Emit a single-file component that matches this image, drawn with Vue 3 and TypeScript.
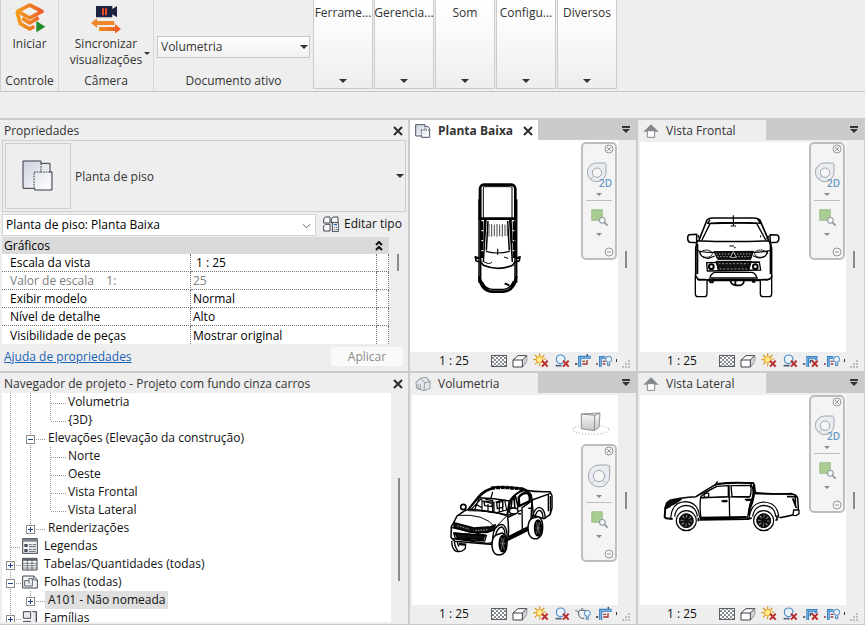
<script setup lang="ts">
import { ref } from 'vue'

type Guide = 'line' | 'tee' | 'corner' | 'plus' | 'minus' | 'plus-last'

interface TreeRow {
  label: string
  guides: Guide[]
  icon?: string
  selected?: boolean
}

interface Property {
  name: string
  value: string
  muted?: boolean
  indent?: boolean
}

interface ViewPane {
  id: string
  title: string
  icon: string
  active?: boolean
  is3d?: boolean
  tools: string[]
}

const documents = ['Volumetria', 'Planta Baixa', 'Vista Frontal', 'Vista Lateral']
const activeDocument = ref('Volumetria')
const viewType = ref('Planta de piso: Planta Baixa')
const menus = ['Ferrame...', 'Gerencia...', 'Som', 'Configu...', 'Diversos']

const properties: Property[] = [
  { name: 'Escala da vista', value: '1 : 25', indent: true },
  { name: 'Valor de escala    1:', value: '25', muted: true },
  { name: 'Exibir modelo', value: 'Normal' },
  { name: 'Nível de detalhe', value: 'Alto' },
  { name: 'Visibilidade de peças', value: 'Mostrar original' },
]

const tree: TreeRow[] = [
  { label: 'Volumetria', guides: ['line', 'line', 'tee'] },
  { label: '{3D}', guides: ['line', 'line', 'corner'] },
  { label: 'Elevações (Elevação da construção)', guides: ['line', 'minus'] },
  { label: 'Norte', guides: ['line', 'line', 'tee'] },
  { label: 'Oeste', guides: ['line', 'line', 'tee'] },
  { label: 'Vista Frontal', guides: ['line', 'line', 'tee'] },
  { label: 'Vista Lateral', guides: ['line', 'line', 'corner'] },
  { label: 'Renderizações', guides: ['line', 'plus-last'] },
  { label: 'Legendas', guides: ['tee'], icon: 'legend' },
  { label: 'Tabelas/Quantidades (todas)', guides: ['plus'], icon: 'table' },
  { label: 'Folhas (todas)', guides: ['minus'], icon: 'sheet' },
  { label: 'A101 - Não nomeada', guides: ['line', 'plus-last'], selected: true },
  { label: 'Famílias', guides: ['plus'], icon: 'family' },
]

const panes: ViewPane[] = [
  { id: 'top', title: 'Planta Baixa', icon: 'plan', active: true, tools: ['checker', 'box', 'sun', 'shadow', 'crop', 'cropbulb'] },
  { id: 'front', title: 'Vista Frontal', icon: 'elevation', tools: ['checker', 'box', 'sun', 'shadow', 'cropx', 'cropbulb'] },
  { id: 'iso', title: 'Volumetria', icon: 'house', is3d: true, tools: ['checker', 'box', 'sun', 'shadow', 'teapot', 'crop'] },
  { id: 'side', title: 'Vista Lateral', icon: 'elevation', tools: ['checker', 'box', 'sun', 'shadow', 'cropx', 'cropbulb'] },
]

const toolNames: Record<string, string> = {
  checker: 'Nível de detalhe',
  box: 'Estilo visual',
  sun: 'Caminho do sol',
  shadow: 'Sombras',
  crop: 'Região de recorte',
  cropx: 'Região de recorte',
  cropbulb: 'Exibir recorte',
  teapot: 'Renderização',
}
</script>

<template>
  <div class="app">
    <svg class="defs" aria-hidden="true">
      <defs>
        <linearGradient id="gLogo" gradientUnits="userSpaceOnUse" x1="0" y1="0" x2="96" y2="0"><stop offset="0" stop-color="#f2a51c" /><stop offset="1" stop-color="#ec5528" /></linearGradient>
        <linearGradient id="gPaper" x1="0" y1="0" x2="1" y2="1"><stop offset="0" stop-color="#ccd1de" /><stop offset="1" stop-color="#ffffff" /></linearGradient>
        <linearGradient id="gCube" x1="0" y1="0" x2="0" y2="1"><stop offset="0" stop-color="#fafafa" /><stop offset="1" stop-color="#c4c4c4" /></linearGradient>
        <pattern id="pCheck" x="3" width="12" height="12" patternUnits="userSpaceOnUse"><rect width="12" height="12" fill="#fff" /><path d="M0 0h6v6H0zM6 6h6v6H6z" fill="#878b92" /></pattern>
      </defs>

      <symbol id="plan" viewBox="0 0 48 42">
        <path d="M2 2h28v5h14v33H20v-4H2z" fill="url(#gPaper)" />
        <path d="M18 36H2V2h28v5h8l6 7v26H20v-4" fill="none" stroke="#4b5568" stroke-width="3" />
        <path d="M30 6v12M18 18h26M19 18v18" fill="none" stroke="#4b5568" stroke-width="3" stroke-dasharray="4 3" />
      </symbol>
      <symbol id="elevation" viewBox="0 0 48 42">
        <path d="M24 1 47 23H1z" fill="#85898e" />
        <path d="M13 20h22v20H13z" fill="#fff" stroke="#85898e" stroke-width="3" />
        <path d="m24 5 15 15H9z" fill="#85898e" />
      </symbol>
      <symbol id="house" viewBox="0 0 48 42">
        <path d="M3 17 17 3l16-2 12 13v20L27 41 5 34z" fill="#e3e6ec" stroke="#8c9198" stroke-width="2.5" />
        <path d="m3 17 14-14 12 14-2 24M29 17l16-3M33 1l14 15M9 21v14l7 2V22" fill="none" stroke="#8c9198" stroke-width="2.5" />
      </symbol>

      <symbol id="checker" viewBox="0 0 48 48"><rect x="1.500" y="7.500" width="45" height="33" fill="url(#pCheck)" stroke="#5a5f66" stroke-width="3" /></symbol>
      <symbol id="box" viewBox="0 0 48 48">
        <path d="M3 21 18 8h26v17L31 42H3z" fill="#fff" stroke="#3e4349" stroke-width="3" stroke-linejoin="round" />
        <path d="M31 21 44 8v17L31 42z" fill="#d2d4d8" /><path d="M3 21h28v21M31 21 44 8" fill="none" stroke="#3e4349" stroke-width="3" />
      </symbol>
      <symbol id="redx" viewBox="0 0 48 48"><path d="m27 23 17 18M44 23 27 41" stroke="#b92b28" stroke-width="6" /></symbol>
      <symbol id="sun" viewBox="0 0 48 48">
        <path d="M20 1v8M1 20h8M6 6l6 6M34 6l-6 6M6 34l6-6M20 32v8M32 18h8" stroke="#d99a18" stroke-width="3.5" />
        <circle cx="20" cy="20" r="10" fill="#ffe98a" stroke="#e5a322" stroke-width="3" /><use href="#redx" />
      </symbol>
      <symbol id="shadow" viewBox="0 0 48 48">
        <circle cx="20" cy="19" r="13" fill="#eaf3fb" stroke="#4a8cc8" stroke-width="3.5" /><path d="M5 38h18" stroke="#4f5f78" stroke-width="5" /><use href="#redx" />
      </symbol>
      <symbol id="crop" viewBox="0 0 48 48">
        <path d="M14 42V13h33" fill="none" stroke="#2b78bf" stroke-width="9" /><path d="M14 42V13h33" fill="none" stroke="#8fc3ee" stroke-width="3" />
        <path d="M22 33h14V21M22 25h8" fill="none" stroke="#a6332f" stroke-width="4" /><path d="M0 33h7M37 8V3" stroke="#333" stroke-width="4" />
      </symbol>
      <symbol id="cropx" viewBox="0 0 48 48">
        <path d="M14 42V13h25v9" fill="none" stroke="#2b78bf" stroke-width="8" /><path d="M14 42V13h25v9" fill="none" stroke="#8fc3ee" stroke-width="2.500" /><path d="M0 33h7M22 31v-9h8" fill="none" stroke="#34506f" stroke-width="4" /><use href="#redx" />
      </symbol>
      <symbol id="cropbulb" viewBox="0 0 48 48">
        <path d="M13 42V13h15" fill="none" stroke="#2b78bf" stroke-width="8" /><path d="M13 42V13h15" fill="none" stroke="#8fc3ee" stroke-width="2.500" /><path d="M0 33h6M20 25h8M20 33h8" fill="none" stroke="#8a3b48" stroke-width="4" />
        <circle cx="38" cy="19" r="9" fill="#e9f4fd" stroke="#4381b4" stroke-width="3" /><path d="M35 29v9h6v-9" fill="#cfe3f5" stroke="#4381b4" stroke-width="3" />
      </symbol>
      <symbol id="teapot" viewBox="0 0 48 48">
        <path d="M12 15h20l-5 20h-8c-7-5-7-12-7-20z" fill="#eef0f3" /><path d="M1 14c7 0 9 4 11 8M12 13h20M18 9h7M11 15c-2 13 2 20 10 22h7" fill="none" stroke="#5d6670" stroke-width="3" />
        <circle cx="37" cy="22" r="9" fill="#e9f4fd" stroke="#4381b4" stroke-width="3" /><path d="M34 31v9h6v-9" fill="#cfe3f5" stroke="#4381b4" stroke-width="3" />
      </symbol>

      <symbol id="legend" viewBox="0 0 48 48">
        <rect x="2" y="2" width="44" height="44" fill="#f3f4f6" stroke="#41464d" stroke-width="3" /><path d="M2 7h44" stroke="#7b828c" stroke-width="8" />
        <path d="M7 18h10v9H7zM7 33h10v9H7z" fill="#4a505a" /><path d="M21 20h8M32 20h10M21 26h20M21 34h8M32 34h10M21 40h20" stroke="#5e6570" stroke-width="3" />
      </symbol>
      <symbol id="table" viewBox="0 0 48 48">
        <path d="M2 7h43v35H2z" fill="#fff" stroke="#41464d" stroke-width="3" /><path d="M2 11h43" stroke="#5c636d" stroke-width="7" />
        <path d="M2 22h43M2 29h43M2 36h43M16 12v30M30 12v30" stroke="#5c636d" stroke-width="2.5" />
      </symbol>
      <symbol id="sheet" viewBox="0 0 48 48">
        <path d="M2 6h33l11 11v25H2z" fill="#f1f3f7" stroke="#41464d" stroke-width="3" /><path d="M35 6v12h11M8 36V20h13v-6h10v22zM21 20v9" fill="none" stroke="#5c6470" stroke-width="3" />
      </symbol>
      <symbol id="family" viewBox="0 0 48 48">
        <path d="M4 5h22v20H4zM31 5h12v37H31M4 34h22v12M4 34v12M43 5v37" fill="#e8eaef" stroke="#41464d" stroke-width="3" />
      </symbol>

      <symbol id="zoomregion" viewBox="0 0 48 48">
        <path d="M2 2h30v30H2z" fill="#a9cd93" stroke="#8fb27d" stroke-width="2" /><circle cx="32" cy="32" r="8" fill="#f5f7f9" stroke="#90989f" stroke-width="3" /><path d="m38 38 9 9" stroke="#90989f" stroke-width="5" />
      </symbol>
      <symbol id="wheel" viewBox="0 0 72 72">
        <path d="M36 3h26q6 0 6 6v27a32 33 0 1 1-32-33z" fill="#e9ecf1" stroke="#a2a7af" stroke-width="3" /><circle cx="36" cy="36" r="17" fill="#f6f6f7" stroke="#a2a7af" stroke-width="3" /><path d="m24 48-9 10M48 48l9 10" stroke="#a2a7af" stroke-width="2" />
      </symbol>
      <symbol id="wheel2d" viewBox="0 0 72 72">
        <path d="M28 3h24q5 0 5 5v22a28 28 0 1 1-29-27z" fill="#e9ecf1" stroke="#a2a7af" stroke-width="3" /><circle cx="30" cy="32" r="14" fill="#f6f6f7" stroke="#a2a7af" stroke-width="3" /><path d="m20 42-8 9" stroke="#a2a7af" stroke-width="2" />
      </symbol>
    </svg>

    <header class="ribbon">
      <section class="group control">
        <button class="tool" type="button">
          <svg class="tool-icon" viewBox="0 0 96 96">
            <g fill="none" stroke="url(#gLogo)" stroke-width="11" stroke-linejoin="round">
              <path d="M47 12 84 31 47 51 11 31z" /><path d="m9 33 10 35 28 16 14-8" /><path d="m25 52 22 14 27-16" />
            </g>
            <path d="M67 60v34l27-17z" fill="#228a27" />
          </svg>
          <span>Iniciar</span>
        </button>
        <span class="group-name">Controle</span>
      </section>
      <section class="group camera">
        <button class="tool" type="button">
          <svg class="tool-icon" viewBox="0 0 96 96">
            <path d="M18 15h49v9l14-9v34l-14-9v9H18z" fill="#1d2440" /><path d="M36 22h6v21h-6zM45 22h6v21h-6z" fill="#ec4a28" />
            <path d="m3 66 18-14v8h52v12H21v8z" fill="#f0862a" /><path d="m93 84-18-15v9H27v12h48v8z" fill="url(#gLogo)" />
          </svg>
          <span>Sincronizar<br>visualizações</span>
          <i class="caret small split"></i>
        </button>
        <span class="group-name">Câmera</span>
      </section>
      <section class="group document">
        <div class="combo">
          <select v-model="activeDocument" aria-label="Documento ativo">
            <option v-for="d in documents" :key="d">{{ d }}</option>
          </select>
          <i class="caret"></i>
        </div>
        <span class="group-name">Documento ativo</span>
      </section>
      <nav class="menus">
        <button v-for="m in menus" :key="m" class="menu" type="button">
          <span>{{ m }}</span><i class="caret"></i>
        </button>
      </nav>
    </header>

    <main class="workspace">
      <aside class="side">
        <section class="panel">
          <div class="titlebar">
            <h2>Propriedades</h2>
            <button class="close" type="button" aria-label="Fechar"><svg viewBox="0 0 10 10"><path d="m1 1 8 8M9 1 1 9" /></svg></button>
          </div>
          <button class="type" type="button">
            <span class="thumb">
              <svg viewBox="0 0 96 96">
                <path d="M3 3h54v6h27v80H37v-6H3z" fill="url(#gPaper)" />
                <path d="M36 85H3V3h54v7h27v26h6v54H38v-7" fill="none" stroke="#333945" stroke-width="3" />
                <path d="M57 10v26H90M57 36H36v46" fill="none" stroke="#333945" stroke-width="3" stroke-dasharray="5 3" />
              </svg>
            </span>
            <span class="type-name">Planta de piso</span>
            <i class="caret"></i>
          </button>
          <div class="instance">
            <div class="select">
              <select v-model="viewType" aria-label="Tipo de vista">
                <option>Planta de piso: Planta Baixa</option>
                <option>Elevação: Vista Frontal</option>
              </select>
              <svg viewBox="0 0 10 6"><path d="m1 1 4 4 4-4" /></svg>
            </div>
            <button class="edit" type="button">
              <svg viewBox="0 0 48 48">
                <path d="m2 9 5-6h14v18H2zM25 9l5-6h15v15M25 21V9M2 30l5-5h14v20H2zM25 21h18" fill="#f7f8fa" stroke="#42474e" stroke-width="3" />
                <rect x="28" y="20" width="18" height="26" fill="#fff" stroke="#42474e" stroke-width="3" /><path d="M32 26h10" stroke="#2c6fb5" stroke-width="4" /><path d="M32 34h3M38 34h4M32 40h3M38 40h4" stroke="#42474e" stroke-width="3" />
              </svg>
              <span>Editar tipo</span>
            </button>
          </div>
          <div class="prop-area">
            <table class="props">
              <colgroup><col class="c-name"><col><col class="c-btn"></colgroup>
              <thead>
                <tr><th colspan="2">Gráficos</th><th><svg viewBox="0 0 8 10"><path d="m1 4 3-3 3 3M1 9l3-3 3 3" /></svg></th></tr>
              </thead>
              <tbody>
                <tr v-for="p in properties" :key="p.name" :class="{ muted: p.muted }">
                  <td>{{ p.name }}</td><td :class="{ indent: p.indent }">{{ p.value }}</td><td></td>
                </tr>
              </tbody>
            </table>
            <div class="scroll"><i class="bar"></i></div>
          </div>
          <div class="panel-foot">
            <a href="#ajuda">Ajuda de propriedades</a>
            <button type="button" class="apply" disabled>Aplicar</button>
          </div>
        </section>

        <section class="panel browser">
          <div class="titlebar">
            <h2>Navegador de projeto - Projeto com fundo cinza carros</h2>
            <button class="close" type="button" aria-label="Fechar"><svg viewBox="0 0 10 10"><path d="m1 1 8 8M9 1 1 9" /></svg></button>
          </div>
          <div class="tree-area">
            <ul class="tree">
              <li v-for="row in tree" :key="row.label">
                <svg v-for="(g, i) in row.guides" :key="i" class="guide" viewBox="0 0 20 18">
                  <path v-if="g === 'line' || g === 'tee' || g === 'plus' || g === 'minus'" class="dots" d="M8.5 0v18" />
                  <path v-else class="dots" d="M8.5 0v10" />
                  <path v-if="g === 'tee' || g === 'corner'" class="dots" :d="row.icon ? 'M9 10.5h10' : 'M9 10.5h15'" />
                  <template v-if="g.startsWith('plus') || g === 'minus'">
                    <path class="dots" :d="row.icon ? 'M14 10.5h5' : 'M14 10.5h10'" />
                    <rect class="node" x="4.5" y="6.5" width="8" height="8" />
                    <path class="sign" :d="g === 'minus' ? 'M6 10.5h5' : 'M6 10.5h5M8.5 8v5'" />
                  </template>
                </svg>
                <svg v-if="row.icon" class="node-icon"><use :href="'#' + row.icon" /></svg>
                <span class="node-label" :class="{ selected: row.selected }">{{ row.label }}</span>
              </li>
            </ul>
            <div class="scroll"><i class="bar long"></i></div>
          </div>
        </section>
      </aside>

      <section class="views">
        <article v-for="pane in panes" :key="pane.id" class="view" :class="{ active: pane.active }">
          <div class="tabs">
            <div class="tab">
              <svg class="tab-icon"><use :href="'#' + pane.icon" /></svg>
              <h3>{{ pane.title }}</h3>
              <button v-if="pane.active" class="close" type="button" aria-label="Fechar vista"><svg viewBox="0 0 10 10"><path d="m1 1 8 8M9 1 1 9" /></svg></button>
            </div>
            <button class="tablist" type="button" aria-label="Lista de vistas"><i class="caret"></i></button>
          </div>
          <div class="stage">
            <div class="canvas">
              <svg v-if="pane.id === 'top'" class="drawing" viewBox="12 72 618 630">
                <g transform="translate(180 174)">
                  <path d="M36 38q2-12 14-12h78q12 0 14 12v90H36z" stroke-width="8" />
                  <path d="M46 126V36q0-4 5-4h76q5 0 5 4v90" stroke-width="3" />
                  <path d="M33 70v250M146 70v250M38 40v280M141 40v280" stroke-width="4.500" />
                  <path d="M33 128h113M54 130l-8 128M125 130l8 128M50 132l-2 70M129 132l3 70M60 135l-5 88M119 135l5 88" stroke-width="4.500" />
                  <path d="M41 136v110M139 136v110" stroke-width="10" stroke-dasharray="26 4" />
                  <path d="M63 144v38M71 144v38M79 146v34M87 144v38M95 146v34M103 144v38M111 146v34M118 144v36" stroke="#444" stroke-width="3" />
                  <path d="M54 226q34 10 71 0M89 218v18" stroke-width="3.500" />
                  <path d="m34 247-12-5 2 12 10 4M145 247l11-5-2 12-9 4M37 256l9 12q43 18 88 0l8-12" stroke-width="5" />
                  <path d="M46 256q18 12 26 2M108 243l12 4" stroke-width="3" />
                  <path d="M34 300q3 44 38 47h34q36-4 39-47" stroke-width="8" /><path d="M43 318q8 20 30 22h33q22-2 30-24" stroke-width="4" />
                  <path d="m36 310 14 24M143 310l-15 24M110 322l14 6M44 330l18 12" stroke-width="6" />
                </g>
              </svg>

              <svg v-else-if="pane.id === 'front'" class="drawing" viewBox="12 72 618 630">
                <path d="m189 366 24-60q6-6 16-6h125q13 0 18 7l26 60" stroke-width="5" />
                <path d="m198 366 24-49q70-3 140-1l27 50M222 305l-7 12M364 302l10 16" stroke-width="4" />
                <path d="M213 316q78-6 165 0M292 292v30M284 324h16" stroke-width="3.500" />
                <path d="M184 368q108 5 215 0l8 22v88l-12 8q-106-3-207 0l-9-12v-84z" stroke-width="4.500" />
                <path d="m182 349-22 1q-5 1-5 10 0 11 6 13l21 1zM402 350l22 1q5 2 5 10t-6 12l-20 1zM186 352l6 10M398 354l-6 10" stroke-width="4.500" />
                <path d="M179 396q22 9 58 7M407 396q-22 7-56 7M190 399q4 22 28 22l18-7M396 399q-4 20-28 21l-17-7" stroke-width="3.500" />
                <path d="M184 378v90M404 378v90" stroke-width="6" />
                <ellipse cx="211" cy="407" rx="18" ry="11" stroke-width="2.500" /><ellipse cx="374" cy="407" rx="18" ry="11" stroke-width="2.500" />
                <path d="m234 401 118-1-8 24H245z" fill="#111" stroke-width="3" /><path d="M240 408h108M244 416h100" stroke="#fff" stroke-width="2" stroke-dasharray="4 5" /><path d="m292 401-9 17h18z" fill="#000" stroke="#fff" stroke-width="2" />
                <path d="m212 434 158-2 4 24-160 3z" stroke-width="4" /><path d="M240 430h106l-8 28h-91z" fill="#111" stroke-width="3" /><path d="M247 437h90M251 453h82" stroke="#ccc" stroke-width="2" stroke-dasharray="6 5" />
                <circle cx="226" cy="446" r="7" stroke-width="6" /><circle cx="358" cy="446" r="7" stroke-width="6" />
                <path d="M222 477q6-14 18-14h105q12 0 17 14M220 480h146" stroke-width="4" />
                <path d="M178 470v57q0 9 8 9h19q8 0 8-9v-44M407 470v57q0 9-8 9h-18q-8 0-8-9v-44M183 484h26M377 484h26" stroke-width="4" />
                <path d="M214 487h158M218 482l5 11h8v-11M350 482v10h8M282 484q2 16 17 18h15q11-4 10-17M300 487q-5 10 0 15" stroke-width="5" />
                <path d="m216 327 4-3M374 352v6M280 384h14M294 389h5" stroke-width="3" />
              </svg>

              <svg v-else-if="pane.id === 'iso'" class="drawing" viewBox="12 69 618 630">
                <path d="M352 355q38 6 74 4l6 12v38l-6 19-18 12-36-12z" fill="#fff" stroke-width="4.500" />
                <path d="m369 370 3 14 56-20M421 366v52M427 372v54M372 384l1 32" stroke-width="4" />
                <path d="m137 452 10-20 20-14 14-6 28-36q20-26 56-31l78 4q20 6 27 22l6 55-8 44-67 32-10 18-56-4-95-8-11-12 1-32z" fill="#fff" stroke-width="4.500" />
                <path d="M250 348q50-5 98 5" stroke-width="10" stroke-dasharray="12 2" /><path d="M212 376q22-24 48-27M306 386q18-25 42-31 18 4 22 24" stroke-width="6" />
                <path d="m182 412 30-35q46 1 92 10l-7 42q-60-14-115-17z" stroke-width="4.500" />
                <path d="m213 380-14 36M222 382v34l36 6v-31l-34-4M232 382l22 4v34M262 390l28-6 6 30-30 8M254 360l-5 18M188 414l32-34M274 384v34M284 383v34M203 396l20 12M240 396v22" stroke-width="3.500" />
                <path d="m228 388 24 6v10l-22-3zM266 392l18-4v18l-16 4z" stroke-width="4" />
                <path d="m298 430 8-42 16-16 8 30-5 22-25 12M312 380l-4 40M318 378l3 34M303 408h20" stroke-width="5" />
                <path d="M332 376q10-14 25-13 10 4 8 24l-31 15z" stroke-width="7" /><path d="m342 404 1 70M344 406l28-20M300 430l42-16" stroke-width="4" />
                <ellipse cx="317" cy="417" rx="13" ry="9" fill="#fff" stroke-width="4.500" /><ellipse cx="166" cy="405" rx="8" ry="8" fill="#fff" stroke-width="5" />
                <path d="M298 430q6 34 2 72M330 425h9M361 409h9M372 386l-3 58" stroke-width="4.500" />
                <path d="M300 503q44-20 66-34l8-16M302 495l63-31" stroke-width="7" />
                <path d="M148 430q84-6 113 36M180 416q78 0 116 16M168 418l-20 14M262 466l34-34" stroke-width="3" />
                <path d="m138 452 60 16 50-4 14-6-4 16-22 8-52-2-46-14z" fill="#111" stroke-width="4" /><path d="m148 461 34 10M202 476l40-3" stroke="#ddd" stroke-width="2.500" stroke-dasharray="4 4" />
                <path d="m129 466 108 25M137 483l98 8-5 16-88-8zM132 500l106 14 17-2" stroke-width="4" /><path d="m142 484 88 7-5 11-77-5z" fill="#111" stroke-width="5" />
                <path d="M254 498q3-38 27-41 18 4 16 46M262 494q5-28 19-29 11 4 10 28" stroke-width="4" /><path d="M372 448q4-40 22-42 17 4 18 34M379 440q6-25 16-25 10 4 10 24" stroke-width="4" />
                <path d="M264 489q-12 6-12 29t14 30h13q17-4 18-31t-14-34z" fill="#fff" stroke-width="4.500" /><ellipse cx="284" cy="515" rx="10" ry="24" fill="#111" stroke-width="5" /><path d="m279 497 10 36M289 497l-10 36M276 515h16" stroke="#aaa" stroke-width="1.500" />
                <path d="M374 438q-14 6-14 31t16 31h11q16-4 17-31t-13-35z" fill="#fff" stroke-width="4.500" /><ellipse cx="390" cy="468" rx="10" ry="24" fill="#111" stroke-width="5" /><path d="m385 450 10 36M395 450l-10 36M382 468h16" stroke="#aaa" stroke-width="1.500" />
                <path d="M131 506q0 26 14 32 18 3 27-9l1-15M139 508q2 19 11 28M148 510l4 14" stroke-width="4" /><path d="m153 516 18 2" stroke-width="7" />
                <g stroke-width="2"><ellipse cx="549" cy="173" rx="54" ry="14" stroke="#b5b5b5" stroke-width="4" stroke-dasharray="3 6" /><path d="m520 126 56-3-3 43-15 10-38-6z" fill="url(#gCube)" stroke="#8f8f8f" stroke-width="3" /><path d="m520 126 40 4 15-6M560 130l-1 46" stroke="#8f8f8f" stroke-width="3" /></g>
              </svg>

              <svg v-else class="drawing" viewBox="12 69 618 630">
                <path d="M88 410q1-20 14-25 33-9 78-11 30-20 58-36 43-8 115-4l6 31 106 1q15 0 20 12l2 30-4 17q-26 8-52 12" stroke-width="4.500" />
                <path d="M88 405l-2 30 4 4 20 2M192 437l140-2M190 443l145-2 12-3" stroke-width="6" />
                <path d="m236 341 9-13M244 335q45-7 110-2M194 374q25-21 49-31l34-2v33l-80 3z" stroke-width="4" />
                <path d="m285 341 58-1q5 15-1 34l-54-1zM279 338l2 101M194 376q-4 30 1 62M345 336q11 20 4 40-11 28-11 48l-5 16" stroke-width="4" />
                <path d="M354 337q2 32-6 55-9 20-10 38" stroke-width="7" /><path d="M205 376q-4-15 13-12v11z" fill="#fff" stroke-width="4" />
                <path d="M197 378q75-5 144-2M255 387h20M326 383h20M182 373l60-30" stroke-width="3" /><path d="M260 385h13v5h-13zM330 381h13v5h-13z" fill="#000" stroke-width="2" />
                <path d="m92 394 19-8 24-4-18 12-24 12zM88 410l16-8" fill="#111" stroke-width="5" />
                <path d="M104 438q3-48 45-49 39 2 42 48M116 434q3-31 34-34 31 2 34 34M339 438q6-46 43-48 44 1 47 48M350 434q4-31 33-34 34 2 36 34" stroke-width="3.500" />
                <circle cx="151" cy="446" r="30" fill="#fff" stroke-width="3.500" /><circle cx="151" cy="446" r="21" fill="#111" stroke-width="3" /><circle cx="151" cy="446" r="13" stroke="#bbb" stroke-width="9" stroke-dasharray="2 8" />
                <circle cx="383" cy="446" r="30" fill="#fff" stroke-width="3.500" /><circle cx="383" cy="446" r="21" fill="#111" stroke-width="3" /><circle cx="383" cy="446" r="13" stroke="#bbb" stroke-width="9" stroke-dasharray="2 8" />
                <path d="M453 374h24M470 379l11 29M478 372v30M423 430v14h-5M354 362q65 6 115 3M187 437v11" stroke-width="5" /><path d="M473 414h16v11q-9 9-18 4z" fill="#fff" stroke-width="4" />
              </svg>

              <div class="navbar" :class="{ low: pane.is3d }">
                <button type="button" class="dot" aria-label="Fechar barra de navegação"><svg viewBox="0 0 10 10"><circle cx="5" cy="5" r="4" /><path d="m3 3 4 4M7 3 3 7" /></svg></button>
                <button type="button" class="wheel" aria-label="Roda de navegação">
                  <svg><use :href="pane.is3d ? '#wheel' : '#wheel2d'" /></svg><b v-if="!pane.is3d">2D</b>
                </button>
                <i class="caret small"></i>
                <hr>
                <button type="button" class="region" aria-label="Zoom da região"><svg><use href="#zoomregion" /></svg></button>
                <i class="caret small"></i>
                <button type="button" class="dot end" aria-label="Opções"><svg viewBox="0 0 10 10"><circle cx="5" cy="5" r="4" /><path d="M3 5h4" /></svg></button>
              </div>
            </div>
            <div class="scroll narrow"><i class="bar mid"></i></div>
          </div>
          <footer class="status">
            <button type="button" class="scale">1 : 25</button>
            <div class="tools">
              <button v-for="t in pane.tools" :key="t" type="button" :aria-label="toolNames[t]"><svg><use :href="'#' + t" /></svg></button>
            </div>
            <i class="more"></i>
            <svg class="grip" viewBox="0 0 9 9"><path d="M6 0h2v2H6zM3 3h2v2H3zM6 3h2v2H6zM0 6h2v2H0zM3 6h2v2H3zM6 6h2v2H6z" /></svg>
          </footer>
        </article>
      </section>
    </main>
  </div>
</template>

<style>
body { margin: 0; overflow: hidden; }
</style>

<style scoped>
* { box-sizing: border-box; }
.app {
  display: flex; flex-direction: column; height: 100vh; overflow: hidden;
  background: #eeeeee; color: #333; font: 12px/16px "Open Sans", "Noto Sans", sans-serif;
}
.defs { position: absolute; width: 0; height: 0; }
button { border: 0; padding: 0; background: none; color: inherit; font: inherit; }
select { appearance: none; border: 0; background: none; color: inherit; font: inherit; width: 100%; height: 100%; padding: 0 20px 0 3px; }
h2, h3 { margin: 0; font: inherit; }
.caret { display: block; width: 0; height: 0; border: 4px solid transparent; border-top-color: #333; border-bottom: 0; }
.caret.small { border-width: 3px 3px 0; }

.ribbon { display: flex; flex: none; height: 92px; border-bottom: 1px solid #c6c6c6; border-left: 1px solid #d0d0d0; }
.group { display: flex; flex-direction: column; align-items: center; justify-content: space-between; padding-bottom: 2px; border-right: 1px solid #d8d8d8; }
.control { width: 58px; }
.camera { width: 95px; }
.document { width: 159px; border-right: 0; padding-top: 36px; }
.tool { position: relative; display: flex; flex-direction: column; align-items: center; padding-top: 1px; }
.tool-icon { width: 32px; height: 32px; margin-bottom: 3px; }
.split { position: absolute; right: -8px; bottom: 13px; }
.combo { position: relative; width: 153px; height: 22px; border: 1px solid #c8c8c8; background: linear-gradient(#fff, #f0f0f2); }
.combo .caret { position: absolute; right: 1px; top: 8px; }
.menus { display: flex; gap: 1px; padding-bottom: 2px; }
.menu { display: flex; flex-direction: column; align-items: center; justify-content: space-between; width: 60px; padding: 5px 0; border: 1px solid #cbcbcb; border-top: 0; background: linear-gradient(#fff, #fafafb 35%, #eeeef0); }

.workspace { display: flex; flex: 1; min-height: 0; margin-top: 26px; border-top: 2px solid #cbcbcb; background: #cbcbcb; padding-bottom: 1px; }
.side { display: grid; grid-template-rows: 1fr 1fr; gap: 2px; width: 408px; flex: none; }
.panel { display: flex; flex-direction: column; min-height: 0; background: #eeeeee; padding-left: 2px; overflow: hidden; }
.titlebar { display: flex; align-items: center; justify-content: space-between; flex: none; height: 20px; padding: 2px 5px 0 2px; }
.close { width: 10px; height: 10px; display: flex; }
.close svg { width: 10px; height: 10px; fill: none; stroke: #2c2c2c; stroke-width: 2; }
.type { display: flex; align-items: center; flex: none; height: 72px; margin-right: 2px; padding: 0 1px 0 2px; border: 1px solid #cdcdcd; text-align: left; }
.thumb { display: flex; align-items: center; justify-content: center; width: 66px; height: 66px; border: 1px solid #cdcdcd; }
.thumb svg { width: 32px; height: 32px; }
.type-name { flex: 1; padding: 2px 0 0 4px; }
.instance { display: flex; gap: 7px; align-items: center; flex: none; height: 25px; padding-top: 1px; }
.select { position: relative; width: 314px; height: 22px; background: #fff; border: 1px solid #d4d4d4; color: #000; }
.select svg { position: absolute; right: 4px; top: 8px; width: 9px; height: 6px; fill: none; stroke: #555; }
.edit { display: flex; align-items: center; gap: 5px; color: #111; padding-bottom: 3px; white-space: nowrap; }
.edit svg { width: 16px; height: 16px; }
.prop-area, .tree-area { display: flex; flex: 1; min-height: 0; }
.prop-area { flex: none; }
.props { width: 387px; table-layout: fixed; border-collapse: separate; border-spacing: 0; color: #000; background: #fff; }
.c-name { width: 189px; }
.c-btn { width: 12px; }
.props th { height: 17px; padding: 0 2px; background: #dadada; font-weight: 400; text-align: left; line-height: 16px; }
.props th svg { width: 8px; height: 10px; margin-left: -4px; display: block; fill: none; stroke: #111; stroke-width: 2; }
.props td { height: 18px; padding: 0 2px; line-height: 17px; white-space: pre; border-bottom: 1px dotted #777; border-right: 1px dotted #777; }
.props td:first-child { padding-left: 8px; }
.props td.indent { padding-left: 5px; }
.props tr:last-child td { border-bottom: 0; }
.muted { color: #7d7d7d; }
.panel-foot { display: flex; flex: 1; align-items: center; justify-content: space-between; padding: 0 5px 2px 2px; }
.panel-foot a { color: #1a63b5; }
.apply { width: 72px; height: 19px; border-radius: 3px; background: #fafafa; color: #8a8a8a; }
.scroll { position: relative; flex: 1; background: #eeeeee; }
.bar { position: absolute; left: 8px; top: 17px; width: 2px; height: 17px; background: #8a8a8a; }
.bar.long { left: 7px; top: 85px; height: 103px; }

.tree-area { margin-bottom: 2px; overflow: hidden; }
.tree { flex: none; width: 389px; margin: 0; padding: 0; list-style: none; background: #fff; color: #111; overflow: hidden; }
.tree li { display: flex; align-items: center; height: 18px; white-space: nowrap; }
.guide { width: 20px; height: 18px; flex: none; overflow: visible; }
.dots { fill: none; stroke: #999; stroke-dasharray: 1 1; }
.node { fill: #fff; stroke: #8c8c8c; }
.sign { fill: none; stroke: #24418c; }
.node-icon { width: 16px; height: 16px; flex: none; }
.node-label { margin-left: 3px; padding: 0 3px; line-height: 18px; }
.selected { background: #dfdfdf; }

.views { display: grid; flex: 1; grid-template-columns: 1fr 1fr; grid-template-rows: 1fr 1fr; gap: 2px; padding: 0 1px 0 2px; min-width: 0; }
.view { display: flex; flex-direction: column; min-width: 0; min-height: 0; background: #eeeeee; }
.tabs { display: flex; justify-content: space-between; flex: none; height: 20px; background: #cbcbcb; }
.tab { display: flex; align-items: center; width: 128px; padding: 2px 5px 0; background: #eeeeee; }
.tab-icon { width: 16px; height: 14px; margin-right: 7px; flex: none; }
.tab h3 { flex: 1; white-space: nowrap; }
.active .tab { background: #fff; }
.active .tab h3 { font-weight: 700; }
.tablist { width: 20px; padding-top: 2px; display: flex; align-items: center; justify-content: center; }
.tablist .caret { position: relative; }
.tablist .caret::before { content: ""; position: absolute; left: -4px; top: -7px; width: 8px; height: 2px; background: #333; }
.stage { display: flex; flex: 1; min-height: 0; padding: 2px 0 0 2px; }
.active .stage { background: linear-gradient(90deg, #fff 208px, #eeeeee 208px); }
.canvas { position: relative; flex: 1; min-width: 0; background: #fff; }
.drawing { display: block; width: 100%; height: 100%; fill: none; stroke: #000; stroke-linejoin: round; }
.scroll.narrow { flex: none; width: 18px; }
.bar.mid { left: 7px; top: 109px; }
.view:nth-child(n + 3) .bar.mid { top: 97px; }
.status { display: flex; align-items: center; flex: none; height: 19px; padding: 0 5px 2px 29px; color: #111; }
.scale { width: 49px; padding-top: 1px; text-align: left; white-space: nowrap; }
.tools { display: flex; }
.tools button { width: 21px; height: 17px; display: flex; align-items: center; justify-content: center; }
.tools svg { width: 16px; height: 16px; }
.more { width: 1px; height: 3px; margin-left: 2px; background: #333; }
.grip { width: 9px; height: 9px; margin: 8px 0 0 auto; fill: #bdbdbd; }

.navbar { position: absolute; right: 1px; top: 0; display: flex; flex-direction: column; align-items: center; width: 36px; height: 118px; border: 2px solid #bdbdbd; border-radius: 5px; background: #f4f4f4; }
.navbar.low { top: 49px; }
.navbar .caret { border-top-color: #8a8a8a; }
.navbar hr { width: 26px; margin: 4px 0; border: 0; border-top: 1px solid #bdbdbd; }
.dot { align-self: flex-end; width: 10px; height: 10px; margin-right: 1px; display: flex; }
.dot svg { width: 10px; height: 10px; fill: none; stroke: #999; }
.dot.end { margin-top: auto; margin-bottom: 1px; }
.wheel { position: relative; width: 24px; height: 34px; margin: 3px 0 2px; display: flex; align-items: center; }
.wheel svg { width: 24px; height: 24px; }
.wheel b { position: absolute; right: -1px; bottom: 2px; font-size: 10px; line-height: 12px; font-weight: 600; color: #6797c4; }
.region { height: 24px; margin-bottom: 4px; display: flex; align-items: center; }
.region svg { width: 17px; height: 17px; }
</style>
